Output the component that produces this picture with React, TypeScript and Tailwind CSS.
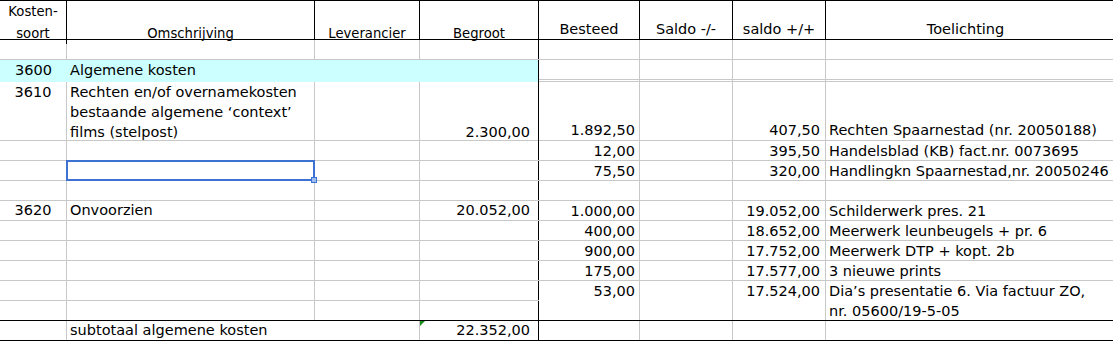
import React from "react";

const FONT = "font-['DejaVu_Sans',sans-serif] text-black";

// Thin grey grid line colour used for ordinary cells
const GRID = "border-[#c8c8c8]";

function SelectionBox() {
  return (
    <div className="pointer-events-none absolute left-[-1px] top-[-1px] right-[-1px] bottom-[-1px] border-2 border-[#3e72d2]">
      <div className="absolute right-[-4px] bottom-[-4px] h-[6px] w-[6px] border border-[#3e72d2] bg-[#9dbcf0]" />
    </div>
  );
}

function ErrorMark() {
  return (
    <svg className="absolute left-0 top-0" width="5" height="5" viewBox="0 0 5 5">
      <polygon points="0,0 5,0 0,5" fill="#1c8a1c" />
    </svg>
  );
}

function LeftBlock() {
  const row = "grid grid-cols-[67px_248px_105px_119px] h-[20px] border-b " + GRID;
  const c = "border-r " + GRID;
  const last = "border-r border-black";
  return (
    <div className="flex w-[539px] flex-col">
      {/* header */}
      <div className="grid h-[40px] grid-cols-[67px_248px_105px_119px] border-y border-black text-[13.2px]">
        <div className="relative flex items-end justify-center border-r border-black">
          <div className="mb-[-1px] text-center leading-[22px]">
            Kosten-
            <br />
            soort
          </div>
        </div>
        <div className="flex items-end justify-center border-r border-black pb-[2px] leading-[16px]">Omschrijving</div>
        <div className="flex items-end justify-center border-r border-black pb-[2px] leading-[16px]">Leverancier</div>
        <div className="flex items-end justify-center border-r border-black pb-[2px] leading-[16px]">Begroot</div>
      </div>

      <div className={row}>
        <div className={c} />
        <div className={c} />
        <div className={c} />
        <div className={last} />
      </div>

      {/* section heading */}
      <div className="grid h-[22px] grid-cols-[67px_248px_105px_119px] bg-[#ccffff] text-[14.5px] leading-[21px]">
        <div className="text-center">3600</div>
        <div className="pl-[3px]">Algemene kosten</div>
        <div />
        <div className={last} />
      </div>

      <div className={"grid h-[59px] grid-cols-[67px_248px_105px_119px] border-b text-[14.5px] leading-[20px] " + GRID}>
        <div className={c + " text-center"}>3610</div>
        <div className={c + " pl-[3px] whitespace-nowrap"}>
          Rechten en/of overnamekosten
          <br />
          bestaande algemene ‘context’
          <br />
          films (stelpost)
        </div>
        <div className={c} />
        <div className={last + " flex items-end justify-end pr-[8px]"}>2.300,00</div>
      </div>

      <div className={row}>
        <div className={c} />
        <div className={c} />
        <div className={c} />
        <div className={last} />
      </div>
      <div className={row}>
        <div className={c} />
        <div className={c + " relative"}>
          <SelectionBox />
        </div>
        <div className={c} />
        <div className={last} />
      </div>
      <div className={row}>
        <div className={c} />
        <div className={c} />
        <div className={c} />
        <div className={last} />
      </div>

      <div className={row + " text-[14.5px] leading-[19px]"}>
        <div className={c + " text-center"}>3620</div>
        <div className={c + " pl-[3px]"}>Onvoorzien</div>
        <div className={c} />
        <div className={last + " text-right pr-[8px]"}>20.052,00</div>
      </div>

      {[0, 1, 2, 3].map((i) => (
        <div key={i} className={row}>
          <div className={c} />
          <div className={c} />
          <div className={c} />
          <div className={last} />
        </div>
      ))}

      <div className="grid h-[20px] grid-cols-[67px_248px_105px_119px] border-b border-black">
        <div className={c} />
        <div className={c} />
        <div className={c} />
        <div className={last} />
      </div>

      {/* subtotal */}
      <div className="grid h-[20px] grid-cols-[67px_248px_105px_119px] border-b border-black text-[14.5px] leading-[19px]">
        <div className={c} />
        <div className="whitespace-nowrap pl-[3px]">subtotaal algemene kosten</div>
        <div className={c} />
        <div className={last + " relative text-right pr-[8px]"}>
          <ErrorMark />
          22.352,00
        </div>
      </div>
    </div>
  );
}

type RRow = { h: string; b?: string; besteed?: string; plus?: string; note?: React.ReactNode; align?: string };

function RightBlock() {
  const c = "border-r " + GRID;
  const rows: RRow[] = [
    { h: "h-[20px]" },
    { h: "h-[20px]" },
    { h: "h-[2px]" },
    { h: "h-[59px]", besteed: "1.892,50", plus: "407,50", note: "Rechten Spaarnestad (nr. 20050188)", align: "items-end" },
    { h: "h-[20px]", besteed: "12,00", plus: "395,50", note: "Handelsblad (KB) fact.nr. 0073695" },
    { h: "h-[20px]", besteed: "75,50", plus: "320,00", note: "Handlingkn Spaarnestad,nr. 20050246" },
    { h: "h-[20px]" },
    { h: "h-[20px]", besteed: "1.000,00", plus: "19.052,00", note: "Schilderwerk pres. 21" },
    { h: "h-[20px]", besteed: "400,00", plus: "18.652,00", note: "Meerwerk leunbeugels + pr. 6" },
    { h: "h-[20px]", besteed: "900,00", plus: "17.752,00", note: "Meerwerk DTP + kopt. 2b" },
    { h: "h-[20px]", besteed: "175,00", plus: "17.577,00", note: "3 nieuwe prints" },
    {
      h: "h-[40px]",
      b: "border-black",
      besteed: "53,00",
      plus: "17.524,00",
      align: "items-start",
      note: (
        <>
          Dia’s presentatie 6. Via factuur ZO,
          <br />
          nr. 05600/19-5-05
        </>
      ),
    },
    { h: "h-[20px]", b: "border-black" },
  ];
  return (
    <div className="flex flex-1 flex-col">
      <div className="grid h-[40px] grid-cols-[101px_93px_93px_287px] border-y border-black text-[14.5px] leading-[16px]">
        <div className="flex items-end justify-center border-r border-black pb-[2px]">Besteed</div>
        <div className="flex items-end justify-center border-r border-black pb-[2px]">Saldo -/-</div>
        <div className="flex items-end justify-center border-r border-black pb-[2px]">saldo +/+</div>
        <div className="flex items-end justify-center pb-[2px] pr-[8px]">Toelichting</div>
      </div>
      {rows.map((r, i) => (
        <div
          key={i}
          className={
            "grid grid-cols-[101px_93px_93px_287px] border-b text-[14.5px] leading-[20px] " +
            r.h +
            " " +
            (r.b ?? GRID)
          }
        >
          <div className={c + " flex justify-end pr-[4px] " + (r.align ?? "items-center")}>{r.besteed}</div>
          <div className={c} />
          <div className={c + " flex justify-end pr-[5px] " + (r.align ?? "items-center")}>{r.plus}</div>
          <div className={"flex overflow-hidden whitespace-nowrap pl-[3px] " + (r.align ?? "items-center")}>
            <div>{r.note}</div>
          </div>
        </div>
      ))}
    </div>
  );
}

export default function App() {
  return (
    <div className={"flex h-[341px] w-[1113px] overflow-hidden bg-white " + FONT}>
      <LeftBlock />
      <RightBlock />
    </div>
  );
}
